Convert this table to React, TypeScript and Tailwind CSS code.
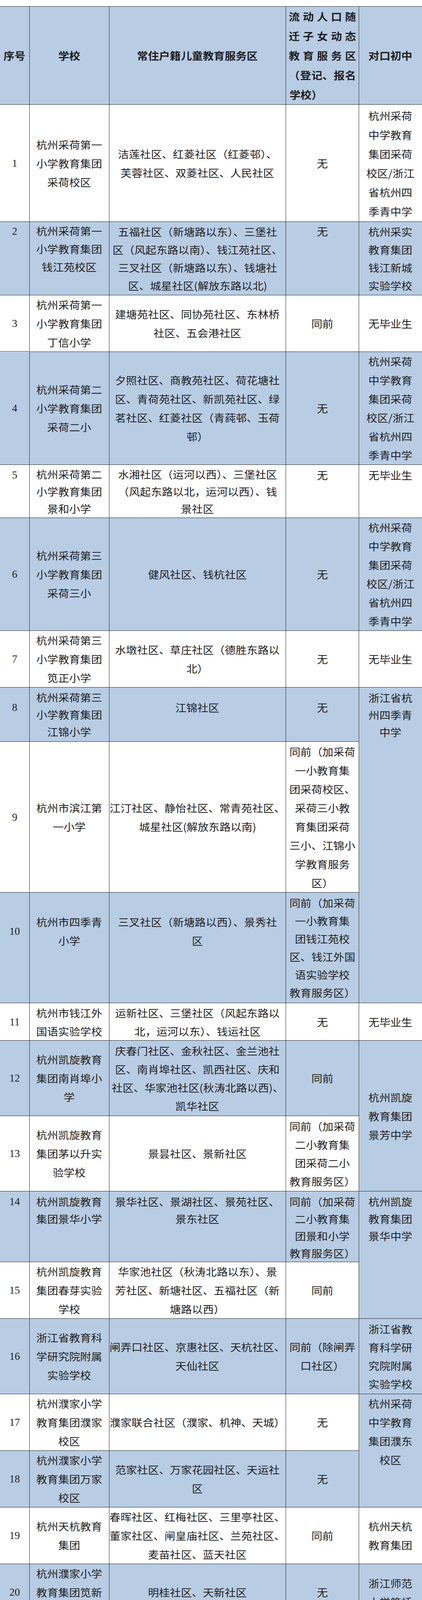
import { Fragment } from "react";
import clsx from "clsx";

type C = { l: string[]; span?: 2 | 3; bg?: string; v?: string; lh?: string };
type Row = { n: string; h: string; nv?: string; s: C; a: C; f?: C; m?: C };

const BLUE = "bg-[#b8cce4]";

// "|" splits lines, "<" = left aligned line, "=" = spread line
function c(text: string, o: Partial<Omit<C, "l">> = {}): C {
  return { l: text.split("|"), ...o };
}

const caihe = "杭州采荷|中学教育|集团采荷|校区/浙江|省杭州四|季青中学";

const rows: Row[] = [
  { n: "1", h: "h-[300px]", s: c("杭州采荷第一|小学教育集团|采荷校区"), a: c("洁莲社区、红菱社区（红菱邨）、|芙蓉社区、双菱社区、人民社区"), f: c("无"), m: c(caihe, { lh: "leading-[49px]" }) },
  { n: "2", h: "h-[188px]", nv: "justify-start", s: c("杭州采荷第一|小学教育集团|钱江苑校区", { v: "justify-start", lh: "leading-[46px]" }), a: c("五福社区（新塘路以东）、三堡社|区（风起东路以南）、钱江苑社区、|三叉社区（新塘路以东）、钱塘社|区、城星社区(解放东路以北)", { lh: "leading-[46px]" }), f: c("无", { v: "justify-start" }), m: c("杭州采实|教育集团|钱江新城|实验学校", { lh: "leading-[46px]" }) },
  { n: "3", h: "h-[144px]", s: c("杭州采荷第一|小学教育集团|丁信小学"), a: c("建塘苑社区、同协苑社区、东林桥|社区、五会港社区"), f: c("同前"), m: c("无毕业生") },
  { n: "4", h: "h-[289px]", s: c("杭州采荷第二|小学教育集团|采荷二小"), a: c("夕照社区、商教苑社区、荷花塘社|区、青荷苑社区、新凯苑社区、绿|茗社区、红菱社区（青莼邨、玉荷|邨）"), f: c("无"), m: c(caihe) },
  { n: "5", h: "h-[136px]", nv: "justify-start pt-[2px]", s: c("杭州采荷第二|小学教育集团|景和小学", { lh: "leading-[44px]" }), a: c("水湘社区（运河以西）、三堡社区|（风起东路以北，运河以西）、钱|景社区", { lh: "leading-[44px]" }), f: c("无", { v: "justify-start pt-[2px]" }), m: c("无毕业生", { v: "justify-start pt-[2px]" }) },
  { n: "6", h: "h-[289px]", s: c("杭州采荷第三|小学教育集团|采荷三小"), a: c("健风社区、钱杭社区"), f: c("无"), m: c(caihe) },
  { n: "7", h: "h-[145px]", s: c("杭州采荷第三|小学教育集团|笕正小学"), a: c("水墩社区、草庄社区（德胜东路以|北）"), f: c("无"), m: c("无毕业生") },
  { n: "8", h: "h-[139px]", nv: "justify-center pb-[36px]", s: c("杭州采荷第三|小学教育集团|江锦小学", { lh: "leading-[44px]" }), a: c("江锦社区", { v: "justify-center pb-[36px]" }), f: c("无", { v: "justify-center pb-[36px]" }), m: c("浙江省杭|州四季青|中学", { span: 3, bg: BLUE, v: "justify-start pt-[4px]", lh: "leading-[44px]" }) },
  { n: "9", h: "h-[386px]", s: c("杭州市滨江第|一小学"), a: c("江汀社区、静怡社区、常青苑社区、|城星社区(解放东路以南)"), f: c("同前（加采荷|一小教育集|团采荷校区、|采荷三小教|育集团采荷|三小、江锦小|学教育服务|区）") },
  { n: "10", h: "h-[283px]", nv: "justify-center pb-[84px]", s: c("杭州市四季青|小学", { v: "justify-center pb-[84px]" }), a: c("三叉社区（新塘路以西）、景秀社|区", { v: "justify-center pb-[84px]" }), f: c("同前（加采荷|一小教育集|团钱江苑校|区、钱江外国|语实验学校|教育服务区）", { lh: "leading-[46px]" }) },
  { n: "11", h: "h-[96px]", s: c("杭州市钱江外|国语实验学校", { lh: "leading-[47px]" }), a: c("运新社区、三堡社区（风起东路以|北，运河以东）、钱运社区", { lh: "leading-[47px]" }), f: c("无"), m: c("无毕业生") },
  { n: "12", h: "h-[193px]", s: c("杭州凯旋教育|集团南肖埠小|学"), a: c("庆春门社区、金秋社区、金兰池社|区、南肖埠社区、凯西社区、庆和|社区、华家池社区(秋涛北路以西)、|凯华社区", { lh: "leading-[47px]" }), f: c("同前"), m: c("杭州凯旋|教育集团|景芳中学", { span: 2, bg: BLUE }) },
  { n: "13", h: "h-[193px]", s: c("杭州凯旋教育|集团茅以升实|验学校"), a: c("景昙社区、景新社区"), f: c("同前（加采荷|二小教育集|团采荷二小|教育服务区）", { lh: "leading-[47px]" }) },
  { n: "14", h: "h-[181px]", nv: "justify-start pt-[2px]", s: c("杭州凯旋教育|集团景华小学", { v: "justify-start pt-[4px]", lh: "leading-[44px]" }), a: c("景华社区、景湖社区、景苑社区、|景东社区", { v: "justify-start pt-[4px]", lh: "leading-[44px]" }), f: c("同前（加采荷|二小教育集|团景和小学|教育服务区）", { v: "justify-start pt-[4px]", lh: "leading-[44px]" }), m: c("杭州凯旋|教育集团|景华中学", { span: 2, bg: BLUE, v: "justify-start pt-[4px]", lh: "leading-[44px]" }) },
  { n: "15", h: "h-[145px]", s: c("杭州凯旋教育|集团春芽实验|学校"), a: c("华家池社区（秋涛北路以东）、景|芳社区、新塘社区、五福社区（新|塘路以西）"), f: c("同前") },
  { n: "16", h: "h-[193px]", s: c("浙江省教育科|学研究院附属|实验学校"), a: c("闸弄口社区、京惠社区、天杭社区、|天仙社区"), f: c("同前（除闸弄|口社区）"), m: c("浙江省教|育科学研|究院附属|实验学校", { lh: "leading-[47px]" }) },
  { n: "17", h: "h-[145px]", s: c("杭州濮家小学|教育集团濮家|校区"), a: c("濮家联合社区（濮家、机神、天城）"), f: c("无"), m: c("杭州采荷|中学教育|集团濮东|校区", { span: 2, bg: BLUE, v: "justify-start" }) },
  { n: "18", h: "h-[145px]", s: c("杭州濮家小学|教育集团万家|校区"), a: c("范家社区、万家花园社区、天运社|区"), f: c("无") },
  { n: "19", h: "h-[145px]", s: c("杭州天杭教育|集团"), a: c("春晖社区、红梅社区、三里亭社区、|董家社区、闸皇庙社区、兰苑社区、|麦苗社区、蓝天社区"), f: c("同前"), m: c("杭州天杭|教育集团") },
  { n: "20", h: "h-[144px]", s: c("杭州濮家小学|教育集团笕新|小学"), a: c("明桂社区、天新社区"), f: c("无"), m: c("浙江师范|大学笕桥|教育集团|笕桥实验|中学", { span: 2, bg: BLUE, v: "justify-start pt-[25px]" }) },
  { n: "21", h: "h-[231px]", nv: "justify-center pb-[32px]", s: c("浙江师范大学|笕桥教育集团|笕桥小学", { v: "justify-center pb-[38px]" }), a: c("笕新社区、黎明社区、浜河社|区、黄家社区、同心社区、横塘社|区、俞章社区、机场社区、农科院|社区、笕桥居民区、金色黎明社区、|<枸桔弄社区", { lh: "leading-[45px]" }), f: c("同前", { v: "justify-center pb-[32px]" }) },
  { n: "22", h: "h-[192px]", s: c("浙江师范大学|笕桥教育集团|笕桥花园小学"), a: c("白石社区、花园社区（环站东路以|东）、草庄社区（德胜东路以南）"), f: c("同前（加采荷|三小教育集|团笕正小学|教育服务区）", { lh: "leading-[47px]" }), m: c("无毕业生") },
  { n: "23", h: "h-[145px]", s: c("浙江师范大学|笕桥教育集团|笕文实验学校"), a: c("东港社区、花园社区（环站东路以|西）"), f: c("同前"), m: c("无毕业生") },
  { n: "24", h: "h-[145px]", s: c("江干区教育发|展研究院附属|澎博小学"), a: c("普福社区、普新社区"), f: c("同前"), m: c("杭州夏衍|教育集团|夏衍初级|中学", { span: 2, bg: BLUE, v: "justify-start pt-[27px]" }) },
  { n: "25", h: "h-[177px]", nv: "justify-start pt-[27px]", s: c("杭州夏衍教育|集团夏衍小学", { v: "justify-start pt-[2px]" }), a: c("茶亭苑社区（新塘路以北）、彭埠|社区、章家坝社区、杨家桥社区、|王家井社区、新风社区、御道社区、|云峰社区、兴隆社区、五堡社区", { v: "justify-start pt-[5px]", lh: "leading-[42px]" }), f: c("同前", { v: "justify-start pt-[27px]" }) },
  { n: "26", h: "h-[97px]", s: c("杭州市夏衍第|二小学"), a: c("茶亭苑社区（新塘路以南）、明月|桥社区、皋塘社区"), f: c("同前"), m: c("无毕业生") },
  { n: "27", h: "h-[192px]", s: c("江干区教育发|展研究院附属|澎雅小学"), a: c("六堡社区、七堡社区、建和社区、|建华社区、红五月社区"), f: c("同前（加采荷|实验教育集|团澎致小学|教育服务区）", { lh: "leading-[47px]" }), m: c("无毕业生") },
  { n: "28", h: "h-[146px]", s: c("杭州采荷实验|教育集团澎致|小学"), a: c("杨柳郡社区"), f: c("无"), m: c("无毕业生") },
  { n: "29", h: "h-[233px]", nv: "justify-start pt-[25px]", s: c("杭州师范大学|东城教育集团|东城实验学校", { v: "justify-start" }), a: c("三村村、宣家埠村、三卫社区、格|畈社区、蚕桑社区、魅力城社区、|九华社区、和华社区、九塘社区（杭|海路以西）", { v: "justify-start", lh: "leading-[46px]" }), f: c("同前", { v: "justify-start pt-[25px]" }), m: c("杭州师范|大学东城|教育集团|东城实验|学校", { v: "justify-start", lh: "leading-[46px]" }) },
  { n: "30", h: "h-[193px]", s: c("杭州师范大学|东城教育集团|东城小学"), a: c("八堡社区、新江花园社区、金海社|区（下沙路以北）、蓝桥社区、红|苹果社区、兴安社区、金雅苑社区、|牛田社区、景蓝社区", { lh: "leading-[47px]" }), f: c("同前"), m: c("杭州师范|大学东城|教育集团|东城中学|（东城第|二实验学|校）", { span: 2, bg: BLUE }) },
  { n: "31", h: "h-[145px]", s: c("杭州师范大学|东城教育集团|东城第二小学"), a: c("杨公社区、丽江社区、江涛社区、|相江社区、金海社区（下沙路以南）"), f: c("同前") },
  { n: "32", h: "h-[182px]", nv: "justify-start pt-[50px]", s: c("杭州师范大学|东城教育集团|东城第二实验|学校", { v: "justify-start pt-[3px]", lh: "leading-[44px]" }), a: c("九塘社区（杭海路以东）、九堡社|区", { v: "justify-start pt-[28px]", lh: "leading-[46px]" }), f: c("同前", { v: "justify-start pt-[50px]" }), m: c("无毕业生", { v: "justify-start pt-[50px]" }) },
  { n: "33", h: "h-[144px]", s: c("杭州师范大学|附属丁兰实验|学校"), a: c("长虹社区、明珠社区、美辰社区、|后珠苑社区、长睦苑社区"), f: c("同前"), m: c("杭州市丁|兰实验中|学") },
  { n: "34", h: "h-[97px]", s: c("杭州市丁兰第|二小学"), a: c("丁桥苑社区、蕙兰社区、河西社区"), f: c("同前"), m: c("无毕业生") },
  { n: "35", h: "h-[97px]", s: c("杭州市丁兰第|三小学"), a: c("丁兰社区（含代管社区）"), f: c("同前"), m: c("无毕业生") },
  { n: "36", h: "h-[144px]", s: c("杭州采荷第二|小学教育集团|丁荷小学"), a: c("大塘苑社区、赵家社区、勤丰社区"), f: c("同前"), m: c("杭州市丁|荷中学") },
  { n: "37", h: "h-[133px]", nv: "justify-center pb-[35px]", s: c("浙江师范大学|附属丁蕙实验|小学", { lh: "leading-[43px]" }), a: c("沿山村、皋城村、三义苑社区、白|马庄社区、枫景园社区、华亭社区、|华睦社区", { lh: "leading-[43px]" }), f: c("同前", { v: "justify-center pb-[35px]" }), m: c("无毕业生", { v: "justify-center pb-[35px]" }) },
  { n: "38", h: "h-[97px]", s: c("杭州市丁蕙第|二小学"), a: c("华鹤社区"), f: c("同前"), m: c("无毕业生") },
  { n: "39", h: "h-[145px]", s: c("杭州天成教育|集团闸弄口校|区"), a: c("无"), f: c("濮家小学教|育集团教育|服务区、闸弄|口社区及全|区其他范围", { span: 2 }), m: c("无毕业生") },
  { n: "40", h: "h-[97px]", s: c("杭州天成教育|集团浜河校区"), a: c("无"), m: c("杭州天成|教育集团") },
];

function Line({ t }: { t: string }) {
  if (t.startsWith("=")) {
    return (
      <div className="flex justify-between px-[8px]">
        {Array.from(t.slice(1)).map((ch, i) => (
          <span key={i} className="inline-block scale-x-[1.08]">
            {ch}
          </span>
        ))}
      </div>
    );
  }
  const left = t.startsWith("<");
  const s = left ? t.slice(1) : t;
  return (
    <div className={clsx("whitespace-nowrap", left ? "pl-[9px] text-left" : "text-center")}>
      <span className={clsx("inline-block scale-x-[1.08]", left && "origin-left")}>{s}</span>
    </div>
  );
}

function Box({ cell, bg, last }: { cell: C; bg: string; last?: boolean }) {
  return (
    <div
      className={clsx(
        "flex min-h-0 flex-col overflow-hidden border-b border-[#262626]",
        !last && "border-r",
        cell.span === 3 && "row-span-3",
        cell.span === 2 && "row-span-2",
        cell.bg ?? bg,
        cell.v ?? "justify-center",
        cell.lh ?? "leading-[48px]"
      )}
    >
      {cell.l.map((t, i) => (
        <Line key={i} t={t} />
      ))}
    </div>
  );
}

export default function App() {
  return (
    <div className="h-[7195px] w-[1080px] overflow-hidden bg-white pt-[16px] font-['Noto_Sans_CJK_SC',sans-serif] text-[26px] font-normal text-[#1e1e1e]">
      <div className="grid grid-cols-[76px_204px_452px_187px_161px] border-t border-[#262626]">
        {/* header */}
        <div className="contents font-bold">
          <div className={clsx("flex h-[251px] flex-col justify-center border-b border-r border-[#262626] leading-[48px]", BLUE)}>
            <Line t="序号" />
          </div>
          <Box cell={c("学校")} bg={BLUE} />
          <Box cell={c("常住户籍儿童教育服务区")} bg={BLUE} />
          <Box cell={c("=流动人口随|=迁子女动态|=教育服务区|=（登记、报名|<学校）", { lh: "leading-[50px]" })} bg={BLUE} />
          <Box cell={c("对口初中")} bg={BLUE} last />
        </div>

        {rows.map((r, i) => {
          const bg = i % 2 === 0 ? "bg-white" : BLUE;
          return (
            <Fragment key={r.n}>
              <div
                className={clsx(
                  "flex flex-col items-center border-b border-r border-[#262626] font-['Liberation_Serif',serif] text-[27px] font-normal leading-[48px]",
                  r.h,
                  bg,
                  r.nv ?? "justify-center"
                )}
              >
                {r.n}
              </div>
              <Box cell={r.s} bg={bg} />
              <Box cell={r.a} bg={bg} />
              {r.f && <Box cell={r.f} bg={bg} />}
              {r.m && <Box cell={r.m} bg={bg} last />}
            </Fragment>
          );
        })}
      </div>
    </div>
  );
}
